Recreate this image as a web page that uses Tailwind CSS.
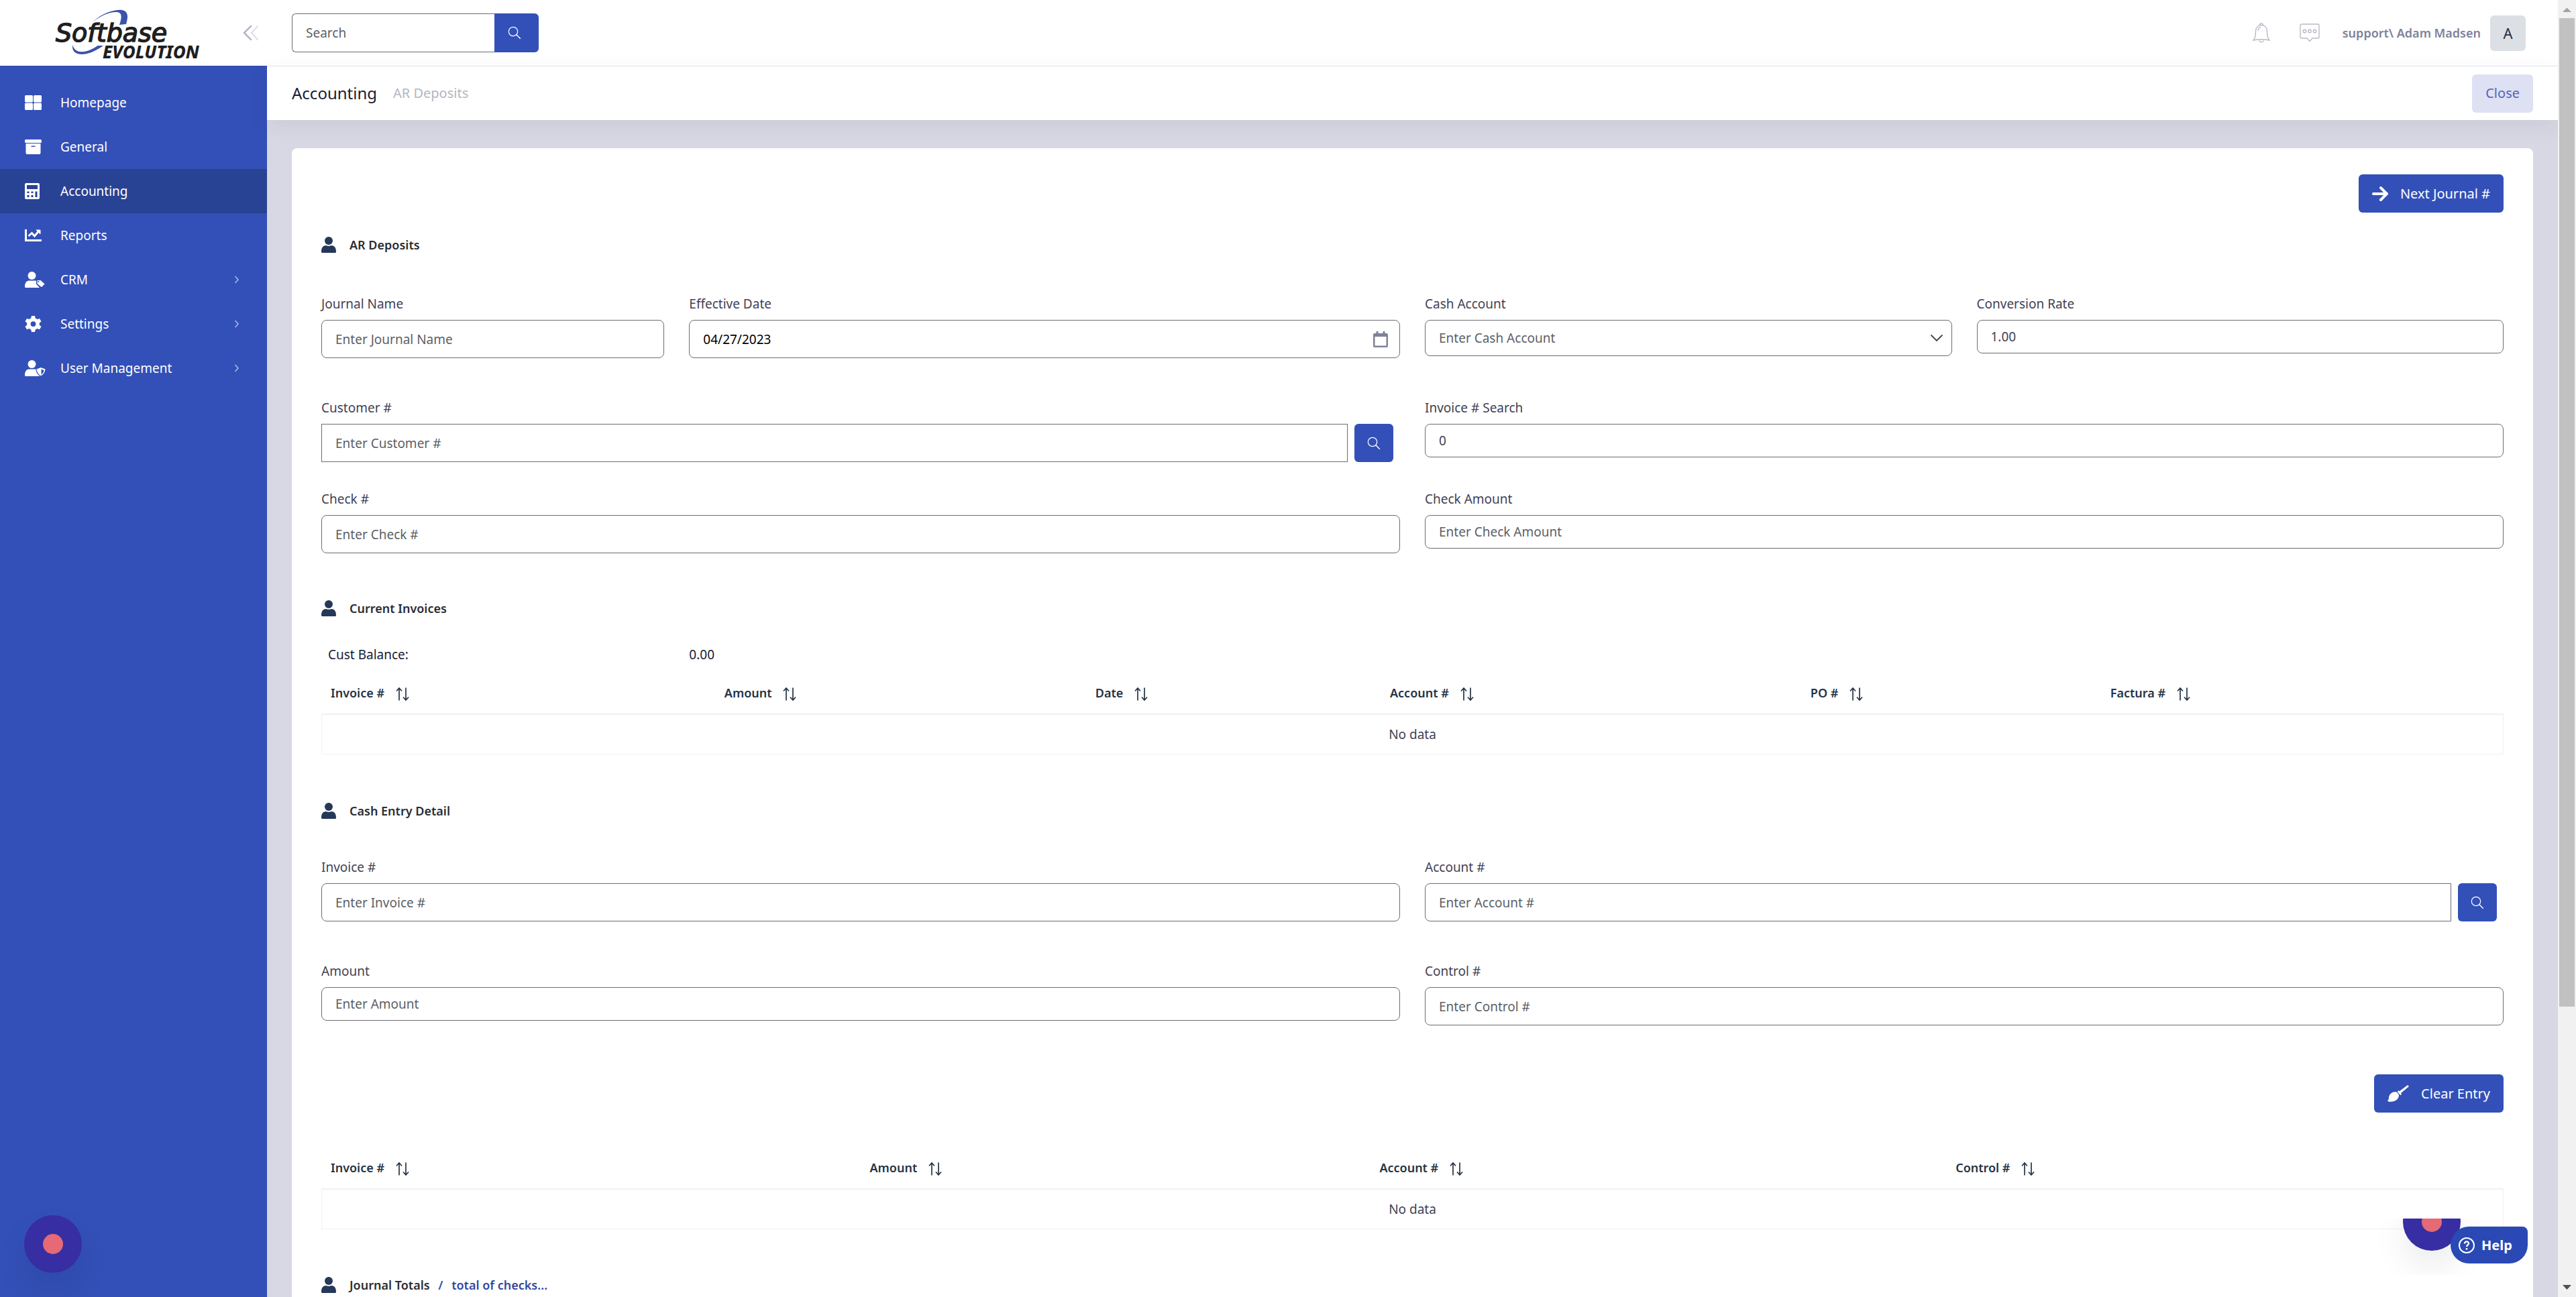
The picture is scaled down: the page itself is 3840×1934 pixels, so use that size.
<!DOCTYPE html>
<html lang="en">
<head>
    <meta charset="UTF-8">
    <meta name="viewport" content="width=device-width, initial-scale=1.0">
    <title>AR Deposits - Softbase Evolution</title>
    <script src="https://cdn.jsdelivr.net/npm/@tailwindcss/browser@4"></script>
</head>
<body class="flex h-screen overflow-hidden bg-[#d7d8e3] font-['Noto_Sans',sans-serif] text-[19px] leading-6 text-[#3f4254]">
    <!-- Shared icons -->
    <svg class="hidden">
        <symbol id="i-user" viewBox="0 0 22 24"><circle cx="11" cy="6" r="6" /><path d="M1 24q-1 0-1-2c0-6 3-9 7-9 2 1 6 1 8 0 4 0 7 3 7 9q0 2-1 2z" /></symbol>
        <symbol id="i-search" viewBox="0 0 20 20"><circle cx="8" cy="8" r="6.7" fill="none" stroke="currentColor" stroke-width="1.2" /><path d="M12.8 12.8l6 6" fill="none" stroke="currentColor" stroke-width="1.4" /></symbol>
        <symbol id="i-sort" viewBox="0 0 20 20"><path d="M5 19.500V1.500M1 5.500l4-4.500 4 4.500M15 .5v18M11 14.500l4 4.500 4-4.500" fill="none" stroke="currentColor" stroke-width="1.700" /></symbol>
        <symbol id="i-right" viewBox="0 0 8 12"><path d="M1.500 1l4.500 5-4.500 5" fill="none" stroke="currentColor" stroke-width="1.600" /></symbol>
    </svg>

    <!-- Sidebar -->
    <aside class="flex w-[398px] shrink-0 flex-col bg-[#3350b8] text-white">
        <div class="flex h-[98px] shrink-0 items-center justify-between bg-white pr-3 pl-[70px]">
            <svg class="h-[98px] w-[240px]" viewBox="0 0 240 98" role="img" aria-label="Softbase Evolution">
                <path fill="#3b53ab" d="M68 33C84 18 102 14 112 15c10 2 9 11 6 21l-10 1c4-11 4-18-3-19-10-1-25 5-37 15zM38 67c-2 17 20 20 46 1l-8 0c-18 12-34 13-38-1z" />
                <text x="13" y="62" font-family="DejaVu Sans" font-size="38" font-style="italic" fill="#1f1f1f" stroke="#1f1f1f" stroke-width="1.500">Softbase</text>
                <text x="83" y="87" font-family="Noto Sans" font-size="26" font-style="italic" font-weight="800" fill="#1f1f1f">EVOLUTION</text>
            </svg>
            <button type="button" aria-label="Collapse menu">
                <svg class="h-6 w-6" viewBox="0 0 24 24" fill="none" stroke-width="2.500" stroke-linecap="round">
                    <path stroke="#b5b5c9" d="M12 2L2 12l10 10" /><path stroke="#e2e2ec" d="M22 2L13 12l9 10" />
                </svg>
            </button>
        </div>
        <nav class="flex flex-col pt-[22px]">
            <a href="#" class="flex h-[66px] items-center pl-[37px]">
                <svg class="h-6 w-[53px]" viewBox="0 0 53 24" fill="currentColor"><rect y="1" width="12" height="10.500" rx="1.500" /><rect x="13" y="1" width="12" height="10.500" rx="1.500" /><rect y="12.500" width="12" height="10.500" rx="1.500" /><rect x="13" y="12.500" width="12" height="10.500" rx="1.500" /></svg>
                Homepage
            </a>
            <a href="#" class="flex h-[66px] items-center pl-[37px]">
                <svg class="h-6 w-[53px]" viewBox="0 0 53 24" fill="currentColor"><rect y="1" width="25" height="5" rx="1.500" /><path fill-rule="evenodd" d="M1.500 7h22v14a2 2 0 01-2 2h-18a2 2 0 01-2-2zM9.500 10.500v1.500h6v-1.500z" /></svg>
                General
            </a>
            <a href="#" class="flex h-[66px] items-center bg-[#284393] pl-[37px]" aria-current="page">
                <svg class="h-6 w-[53px]" viewBox="0 0 53 24" fill="currentColor"><path fill-rule="evenodd" d="M2 0h18a2 2 0 012 2v20a2 2 0 01-2 2H2a2 2 0 01-2-2V2a2 2 0 012-2zM3 3v6h16V3zM3.500 12.500v2.500h3v-2.500zM9.500 12.500v2.500h3v-2.500zM3.500 18v3h3v-3zM9.500 18v3h3v-3zM15.500 12.500v8.500h3v-8.500z" /></svg>
                Accounting
            </a>
            <a href="#" class="flex h-[66px] items-center pl-[37px]">
                <svg class="h-6 w-[53px]" viewBox="0 0 53 24" fill="none" stroke="currentColor" stroke-width="3"><path d="M1.500 3v16.500H25M5.500 13l5-4.500 4 4.500 6-7" /><path d="M17 4h6v6z" fill="currentColor" stroke-width="1" /></svg>
                Reports
            </a>
            <a href="#" class="flex h-[66px] items-center pr-[41px] pl-[37px]">
                <svg class="h-6 w-[53px]" viewBox="0 0 53 24" fill="currentColor"><circle cx="10.500" cy="6" r="6" /><path d="M1 24q-1 0-1-2c0-6 3-8.500 7-8.500h10v5l5 5.500z" /><path d="M18 12.500h6l6.500 6-5.500 5.500-7-5.500z" stroke="#3350b8" stroke-width="1.200" /><circle cx="20.500" cy="15" r="1" fill="#3350b8" /></svg>
                <span class="flex-1">CRM</span>
                <svg class="h-3 w-2 text-[#a9b6e6]"><use href="#i-right" /></svg>
            </a>
            <a href="#" class="flex h-[66px] items-center pr-[41px] pl-[37px]">
                <svg class="h-6 w-[53px]" viewBox="0 0 53 24" fill="currentColor"><path fill-rule="evenodd" d="M10 0h5l.8 3.600 2.700 1.500 3.500-1.100 2.500 4.200-2.700 2.400v3l2.700 2.400-2.500 4.200-3.500-1.100-2.700 1.500L15 24h-5l-.8-3.400-2.700-1.500L3 20.200.5 16l2.700-2.400v-3L.5 8.200 3 4l3.500 1.100 2.700-1.500zM12.500 8.200a3.900 3.900 0 100 7.800 3.900 3.900 0 000-7.800z" /></svg>
                <span class="flex-1">Settings</span>
                <svg class="h-3 w-2 text-[#a9b6e6]"><use href="#i-right" /></svg>
            </a>
            <a href="#" class="flex h-[66px] items-center pr-[41px] pl-[37px]">
                <svg class="h-6 w-[53px]" viewBox="0 0 53 24" fill="currentColor"><circle cx="10.500" cy="6" r="6" /><path d="M1 24q-1 0-1-2c0-6 3-8.500 7-8.500h10l5 10.500z" /><path d="M24 10.500l7 2.500c0 5-2 8.500-7 11-5-2.500-7-6-7-11z" stroke="#3350b8" stroke-width="1.200" /><path d="M24.500 13.500l4 1.500c-.2 3-1.500 5-4 6.500z" fill="#3350b8" /></svg>
                <span class="flex-1">User Management</span>
                <svg class="h-3 w-2 text-[#a9b6e6]"><use href="#i-right" /></svg>
            </a>
        </nav>
    </aside>

    <div class="flex min-w-0 flex-1 flex-col">
        <!-- Top bar -->
        <header class="flex h-[99px] shrink-0 items-center justify-between border-b border-[#e4e6ef] bg-white pr-12 pl-[37px]">
            <form class="flex h-[58px]">
                <input type="text" aria-label="Search" placeholder="Search" class="w-[302px] rounded-l-md border border-r-0 border-[#6c6c74] px-5 placeholder:text-[#5c5f66]">
                <button type="button" aria-label="Search" class="flex w-[66px] items-center rounded-r-md bg-[#3350b8] pl-5 text-white"><svg class="h-5 w-5"><use href="#i-search" /></svg></button>
            </form>
            <div class="flex items-center">
                <button type="button" aria-label="Notifications" class="mr-11">
                    <svg class="h-[30px] w-[26px]" viewBox="0 0 26 30" fill="none" stroke="#b9bac4" stroke-width="1.400"><path d="M1 26c3-3 3.500-7 3.500-13C4.500 7 8 3.500 13 3.500S21.500 7 21.500 13c0 6 .5 10 3.500 13-7-1.500-17-1.500-24 0zM10.500 3.500a2.500 2.500 0 015 0M9.500 26.500c1.500 3 5.500 3 7 0M8 12c0-3 1-5 4-5.500" /></svg>
                </button>
                <button type="button" aria-label="Messages" class="mr-[34px]">
                    <svg class="h-[28px] w-[30px]" viewBox="0 0 30 28" fill="none" stroke="#b9bac4" stroke-width="1.400"><path d="M3 1h24a2 2 0 012 2v17a2 2 0 01-2 2h-8l-4 4.500-4-4.500H3a2 2 0 01-2-2V3a2 2 0 012-2z" /><circle cx="7.500" cy="11.500" r="2.200" /><circle cx="15" cy="11.500" r="2.200" /><circle cx="22.500" cy="11.500" r="2.200" /></svg>
                </button>
                <span class="text-[18px] font-semibold text-[#7e8299]">support\ Adam Madsen</span>
                <span class="ml-[14px] flex size-[53px] items-center justify-center rounded-md bg-[#dcdfe4] text-[22px] text-[#282c3c]">A</span>
            </div>
        </header>

        <!-- Breadcrumb bar -->
        <div class="flex h-20 shrink-0 items-center justify-between bg-white pr-[37px] pl-[37px] shadow-[0_10px_30px_0_rgba(82,63,105,0.08)]">
            <div class="flex items-center gap-6">
                <h1 class="text-[24px] text-[#181c32]">Accounting</h1>
                <a href="#" class="text-[20px] text-[#b5b5c3]">AR Deposits</a>
            </div>
            <button type="button" class="h-[57px] rounded-md bg-[#dde1f3] px-5 text-[20px] text-[#5563b8]">Close</button>
        </div>

        <main class="min-h-0 flex-1 overflow-hidden px-[37px] pt-[42px]">
            <div class="rounded-t-lg bg-white px-[44px] pt-[39px] pb-20">
                <div class="flex justify-end">
                    <button type="button" class="flex h-[57px] items-center gap-[18px] rounded-md bg-[#3350b8] px-5 text-[20px] text-white">
                        <svg class="h-6 w-6" viewBox="0 0 24 24" fill="none" stroke="currentColor" stroke-width="4" stroke-linecap="round" stroke-linejoin="round"><path d="M2 12h19M13 3l9 9-9 9" /></svg>
                        Next Journal #
                    </button>
                </div>

                <!-- AR Deposits -->
                <h2 class="mt-9 flex items-center gap-5 text-[18px] font-semibold text-[#2b2d33]"><svg class="h-6 w-[22px] fill-[#253858]"><use href="#i-user" /></svg>AR Deposits</h2>
                <div class="mt-16 grid grid-cols-12 items-start gap-x-[37px]">
                    <div class="col-span-2">
                        <label for="journal" class="mb-3 block">Journal Name</label>
                        <input id="journal" type="text" placeholder="Enter Journal Name" class="block h-[57px] w-full rounded-lg border border-[#6c6c74] px-5 placeholder:text-[#5c5f66]">
                    </div>
                    <div class="col-span-4">
                        <label for="date" class="mb-3 block">Effective Date</label>
                        <div class="flex h-[57px] items-center rounded-lg border border-[#6c6c74] px-[17px]">
                            <input id="date" type="text" value="04/27/2023" class="ml-[3px] min-w-0 flex-1 text-black outline-none">
                            <button type="button" aria-label="Open calendar"><svg class="h-6 w-[22px]" viewBox="0 0 22 24" fill="#7e8299"><path fill-rule="evenodd" d="M4.500 0h3v3h7V0h3v3H20a2 2 0 012 2v17a2 2 0 01-2 2H2a2 2 0 01-2-2V5a2 2 0 012-2h2.500zM2.500 8v13.500h17V8z" /></svg></button>
                        </div>
                    </div>
                    <div class="col-span-3">
                        <label for="cash" class="mb-3 block">Cash Account</label>
                        <div class="grid items-center">
                            <select id="cash" class="col-start-1 row-start-1 h-[54px] w-full appearance-none rounded-lg border border-[#6c6c74] px-5 text-[#5c5f66]">
                                <option>Enter Cash Account</option>
                            </select>
                            <svg class="pointer-events-none col-start-1 row-start-1 mr-[13px] h-3 w-5 justify-self-end" viewBox="0 0 20 12" fill="none" stroke="#444" stroke-width="1.800"><path d="M1.500 1.500L10 10l8.500-8.500" /></svg>
                        </div>
                    </div>
                    <div class="col-span-3">
                        <label for="rate" class="mb-3 block">Conversion Rate</label>
                        <input id="rate" type="text" value="1.00" class="block h-[50px] w-full rounded-lg border border-[#6c6c74] px-5">
                    </div>
                </div>
                <div class="mt-[62px] grid grid-cols-12 items-start gap-x-[37px]">
                    <div class="col-span-6">
                        <label for="customer" class="mb-3 block">Customer #</label>
                        <div class="flex gap-[10px] pr-[10px]">
                            <input id="customer" type="text" placeholder="Enter Customer #" class="h-[57px] min-w-0 flex-1 border border-[#6c6c74] px-5 placeholder:text-[#5c5f66]">
                            <button type="button" aria-label="Find customer" class="flex w-[58px] items-center justify-center rounded-md bg-[#3350b8] text-white"><svg class="h-5 w-5"><use href="#i-search" /></svg></button>
                        </div>
                    </div>
                    <div class="col-span-6">
                        <label for="invoice-search" class="mb-3 block">Invoice # Search</label>
                        <input id="invoice-search" type="text" value="0" class="block h-[50px] w-full rounded-lg border border-[#6c6c74] px-5">
                    </div>
                </div>
                <div class="mt-[43px] grid grid-cols-12 items-start gap-x-[37px]">
                    <div class="col-span-6">
                        <label for="check" class="mb-3 block">Check #</label>
                        <input id="check" type="text" placeholder="Enter Check #" class="block h-[57px] w-full rounded-lg border border-[#6c6c74] px-5 placeholder:text-[#5c5f66]">
                    </div>
                    <div class="col-span-6">
                        <label for="check-amount" class="mb-3 block">Check Amount</label>
                        <input id="check-amount" type="text" placeholder="Enter Check Amount" class="block h-[50px] w-full rounded-lg border border-[#6c6c74] px-5 placeholder:text-[#5c5f66]">
                    </div>
                </div>

                <!-- Current Invoices -->
                <h2 class="mt-[70px] flex items-center gap-5 text-[18px] font-semibold text-[#2b2d33]"><svg class="h-6 w-[22px] fill-[#253858]"><use href="#i-user" /></svg>Current Invoices</h2>
                <div class="mt-[45px] grid grid-cols-12 gap-x-[37px] text-[#181c32]">
                    <span class="col-span-2 pl-[10px]">Cust Balance:</span>
                    <span class="col-span-4">0.00</span>
                </div>
                <table class="mt-[14px] w-full table-fixed border-separate border-spacing-0 text-left">
                    <thead class="text-[18px] text-[#253345]">
                        <tr class="h-[62px]">
                            <th class="w-[18.04%] px-[14px] font-semibold">Invoice # <svg class="ml-3 inline h-5 w-5"><use href="#i-sort" /></svg></th>
                            <th class="w-[17%] px-[14px] font-semibold">Amount <svg class="ml-3 inline h-5 w-5"><use href="#i-sort" /></svg></th>
                            <th class="w-[13.5%] px-[14px] font-semibold">Date <svg class="ml-3 inline h-5 w-5"><use href="#i-sort" /></svg></th>
                            <th class="w-[19.27%] px-[14px] font-semibold">Account # <svg class="ml-3 inline h-5 w-5"><use href="#i-sort" /></svg></th>
                            <th class="w-[13.74%] px-[14px] font-semibold">PO # <svg class="ml-3 inline h-5 w-5"><use href="#i-sort" /></svg></th>
                            <th class="px-[14px] font-semibold">Factura # <svg class="ml-3 inline h-5 w-5"><use href="#i-sort" /></svg></th>
                        </tr>
                    </thead>
                    <tbody>
                        <tr class="h-[61px]"><td colspan="6" class="border border-t-2 border-[#f1f1f3] text-center">No data</td></tr>
                    </tbody>
                </table>

                <!-- Cash Entry Detail -->
                <h2 class="mt-[72px] flex items-center gap-5 text-[18px] font-semibold text-[#2b2d33]"><svg class="h-6 w-[22px] fill-[#253858]"><use href="#i-user" /></svg>Cash Entry Detail</h2>
                <div class="mt-[60px] grid grid-cols-12 items-start gap-x-[37px]">
                    <div class="col-span-6">
                        <label for="invoice" class="mb-3 block">Invoice #</label>
                        <input id="invoice" type="text" placeholder="Enter Invoice #" class="block h-[57px] w-full rounded-lg border border-[#6c6c74] px-5 placeholder:text-[#5c5f66]">
                    </div>
                    <div class="col-span-6">
                        <label for="account" class="mb-3 block">Account #</label>
                        <div class="flex gap-[10px] pr-[10px]">
                            <input id="account" type="text" placeholder="Enter Account #" class="h-[57px] min-w-0 flex-1 rounded-l-lg border border-[#6c6c74] px-5 placeholder:text-[#5c5f66]">
                            <button type="button" aria-label="Find account" class="flex w-[58px] items-center justify-center rounded-md bg-[#3350b8] text-white"><svg class="h-5 w-5"><use href="#i-search" /></svg></button>
                        </div>
                    </div>
                </div>
                <div class="mt-[62px] grid grid-cols-12 items-start gap-x-[37px]">
                    <div class="col-span-6">
                        <label for="amount" class="mb-3 block">Amount</label>
                        <input id="amount" type="text" placeholder="Enter Amount" class="block h-[50px] w-full rounded-lg border border-[#6c6c74] px-5 placeholder:text-[#5c5f66]">
                    </div>
                    <div class="col-span-6">
                        <label for="control" class="mb-3 block">Control #</label>
                        <input id="control" type="text" placeholder="Enter Control #" class="block h-[57px] w-full rounded-lg border border-[#6c6c74] px-5 placeholder:text-[#5c5f66]">
                    </div>
                </div>
                <div class="mt-[73px] flex justify-end">
                    <button type="button" class="flex h-[57px] items-center gap-[18px] rounded-md bg-[#3350b8] px-5 text-[20px] text-white">
                        <svg class="h-7 w-8" viewBox="0 0 32 28" fill="currentColor"><path d="M30 1l2 2-12 10 1 2-2 1-4-5 1-2 2 1zM12 11c2 0 5 3 5 6-1 6-6 9-15 9l-2-2c2-1 2-3 2-5 1-5 5-8 10-8z" /></svg>
                        Clear Entry
                    </button>
                </div>
                <table class="mt-[51px] w-full table-fixed border-separate border-spacing-0 text-left">
                    <thead class="text-[18px] text-[#253345]">
                        <tr class="h-[62px]">
                            <th class="w-[24.7%] px-[14px] font-semibold">Invoice # <svg class="ml-3 inline h-5 w-5"><use href="#i-sort" /></svg></th>
                            <th class="w-[23.36%] px-[14px] font-semibold">Amount <svg class="ml-3 inline h-5 w-5"><use href="#i-sort" /></svg></th>
                            <th class="w-[26.4%] px-[14px] font-semibold">Account # <svg class="ml-3 inline h-5 w-5"><use href="#i-sort" /></svg></th>
                            <th class="px-[14px] font-semibold">Control # <svg class="ml-3 inline h-5 w-5"><use href="#i-sort" /></svg></th>
                        </tr>
                    </thead>
                    <tbody>
                        <tr class="h-[61px]"><td colspan="4" class="border border-t-2 border-[#f1f1f3] text-center">No data</td></tr>
                    </tbody>
                </table>

                <!-- Journal Totals -->
                <h2 class="mt-[71px] flex items-center gap-5 text-[18px] font-semibold text-[#2b2d33]"><svg class="h-6 w-[22px] fill-[#253858]"><use href="#i-user" /></svg><span>Journal Totals <span class="ml-2 text-[#3350b8]">/</span> <a href="#" class="ml-2 text-[#3448a0]">total of checks...</a></span></h2>
            </div>
        </main>
    </div>

    <!-- Scrollbar -->
    <div class="flex w-[27px] shrink-0 flex-col items-center bg-[#f1f1f1]">
        <svg class="h-[27px] w-[13px] shrink-0" viewBox="0 0 13 27" fill="#a3a3a3"><path d="M0 18l6.500-6.500L13 18z" /></svg>
        <div class="h-[76.2%] w-[23px] bg-[#c1c1c1]"></div>
        <svg class="mt-auto h-[27px] w-[13px] shrink-0" viewBox="0 0 13 27" fill="#505050"><path d="M0 9l6.500 7L13 9z" /></svg>
    </div>

    <!-- Floating widgets -->
    <div class="fixed bottom-9 left-9 flex size-[86px] items-center justify-center rounded-full bg-[#372ea3] shadow-[0_25px_50px_rgba(0,0,0,0.08)]">
        <span class="size-[30px] rounded-full bg-[#e56a76]"></span>
    </div>
    <div class="fixed right-[120px] bottom-[33px] h-[84px] w-[274px] overflow-hidden">
        <div class="absolute -top-[38px] left-[136px] flex size-[86px] items-center justify-center rounded-full bg-[#372ea3] shadow-[0_25px_50px_rgba(0,0,0,0.08)]">
            <span class="size-[30px] rounded-full bg-[#e56a76]"></span>
        </div>
    </div>
    <button type="button" class="fixed right-[72px] bottom-[50px] flex h-[55px] w-[115px] items-center gap-[10px] rounded-t-[8px] rounded-b-[28px] rounded-tl-[28px] bg-[#2a49b5] pl-3 text-[20px] font-bold text-white">
        <svg class="h-6 w-6" viewBox="0 0 24 24" fill="none" stroke="currentColor" stroke-width="2"><circle cx="12" cy="12" r="11" /><path d="M9 9.500c0-4 6-4 6-.5 0 2.500-3 2.500-3 5" stroke-width="2.300" /><path d="M12 16v2.500" stroke-width="2.500" /></svg>
        Help
    </button>
</body>
</html>
